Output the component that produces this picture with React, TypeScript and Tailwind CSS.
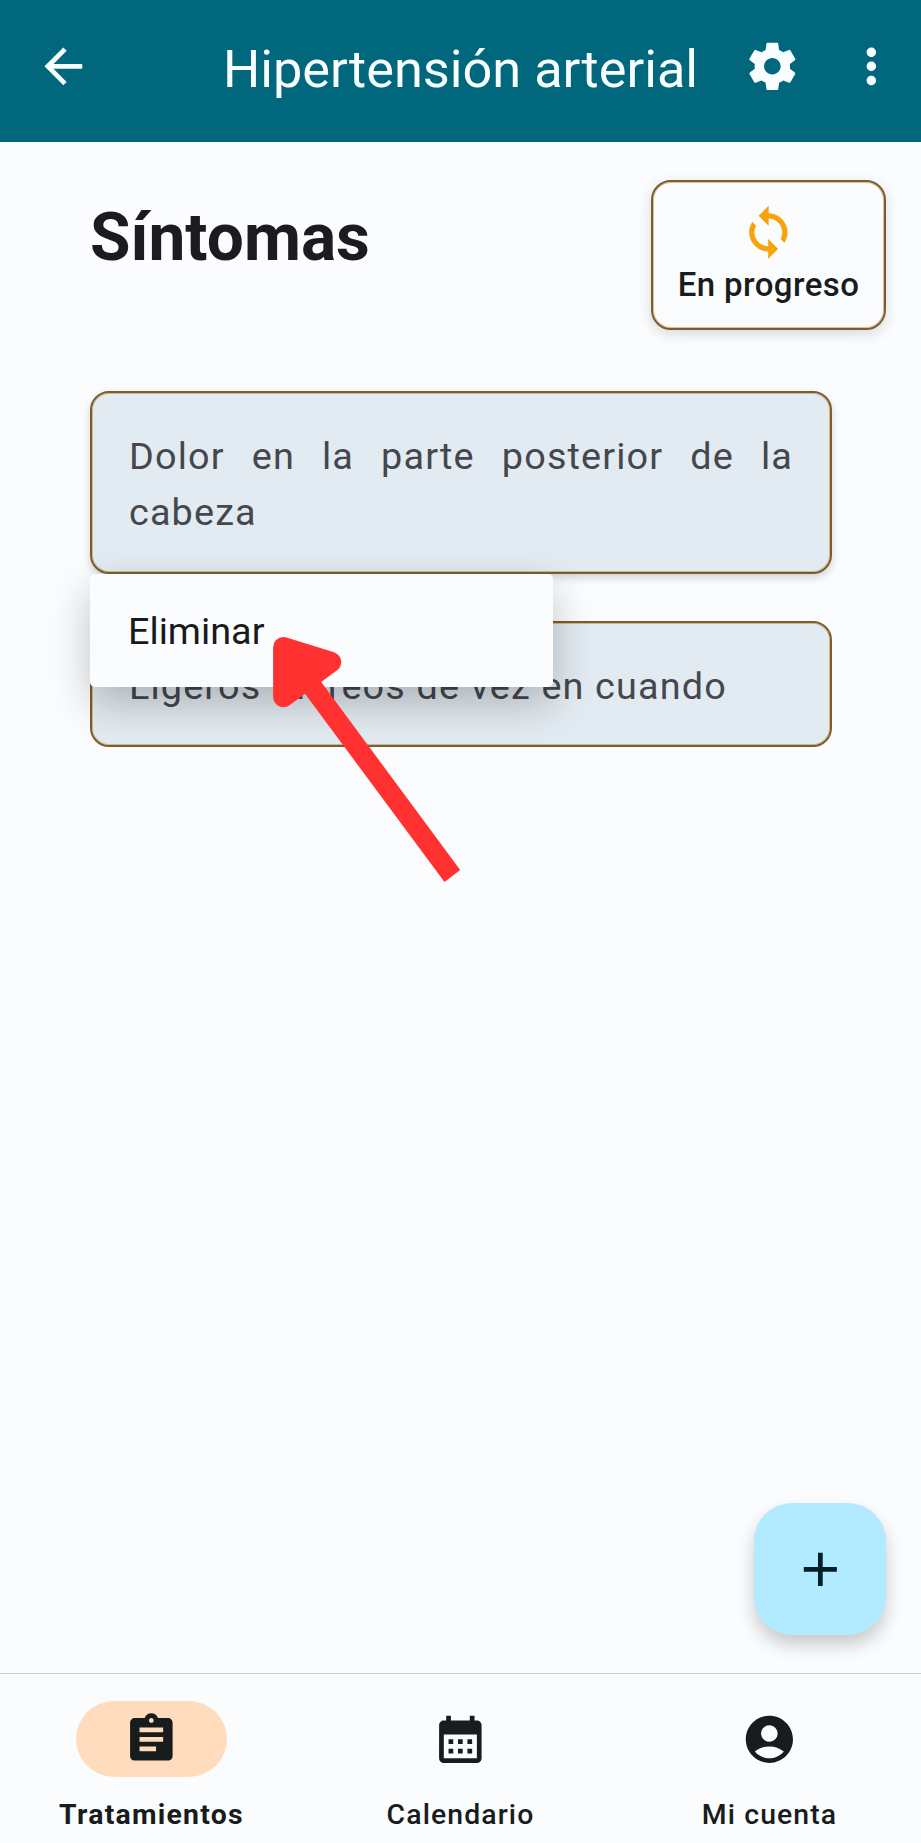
import React from "react";

const paths = {
  back: "M20 11H7.83l5.59-5.59L12 4l-8 8 8 8 1.41-1.41L7.83 13H20v-2z",
  settings:
    "M19.43 12.98c.04-.32.07-.64.07-.98s-.03-.66-.07-.98l2.11-1.65c.19-.15.24-.42.12-.64l-2-3.46c-.12-.22-.39-.3-.61-.22l-2.49 1c-.52-.4-1.08-.73-1.69-.98l-.38-2.65C14.46 2.18 14.25 2 14 2h-4c-.25 0-.46.18-.49.42l-.38 2.65c-.61.25-1.17.59-1.69.98l-2.49-1c-.23-.09-.49 0-.61.22l-2 3.46c-.13.22-.07.49.12.64l2.11 1.65c-.04.32-.07.65-.07.98s.03.66.07.98l-2.11 1.65c-.19.15-.24.42-.12.64l2 3.46c.12.22.39.3.61.22l2.49-1c.52.4 1.08.73 1.69.98l.38 2.65c.03.24.24.42.49.42h4c.25 0 .46-.18.49-.42l.38-2.65c.61-.25 1.17-.59 1.69-.98l2.49 1c.23.09.49 0 .61-.22l2-3.46c.12-.22.07-.49-.12-.64l-2.11-1.65zM12 15.5c-1.93 0-3.5-1.57-3.5-3.5s1.57-3.5 3.5-3.5 3.5 1.57 3.5 3.5-1.57 3.5-3.5 3.5z",
  more: "M12 8c1.1 0 2-.9 2-2s-.9-2-2-2-2 .9-2 2 .9 2 2 2zm0 2c-1.1 0-2 .9-2 2s.9 2 2 2 2-.9 2-2-.9-2-2-2zm0 6c-1.1 0-2 .9-2 2s.9 2 2 2 2-.9 2-2-.9-2-2-2z",
  sync: "M12 4V1L8 5l4 4V6c3.31 0 6 2.69 6 6 0 1.01-.25 1.97-.7 2.8l1.46 1.46C19.54 15.03 20 13.57 20 12c0-4.42-3.58-8-8-8zm0 14c-3.31 0-6-2.69-6-6 0-1.01.25-1.97.7-2.8L5.24 7.74C4.46 8.97 4 10.43 4 12c0 4.42 3.58 8 8 8v3l4-4-4-4v3z",
  add: "M19 13h-6v6h-2v-6H5v-2h6V5h2v6h6v2z",
  assignment:
    "M19 3h-4.18C14.4 1.84 13.3 1 12 1c-1.3 0-2.4.84-2.82 2H5c-1.1 0-2 .9-2 2v14c0 1.1.9 2 2 2h14c1.1 0 2-.9 2-2V5c0-1.1-.9-2-2-2zm-7 0c.55 0 1 .45 1 1s-.45 1-1 1-1-.45-1-1 .45-1 1-1zm2 14H7v-2h7v2zm3-4H7v-2h10v2zm0-4H7V7h10v2z",
  calendar:
    "M19 4h-1V2h-2v2H8V2H6v2H5c-1.11 0-1.99.9-1.99 2L3 20c0 1.1.89 2 2 2h14c1.1 0 2-.9 2-2V6c0-1.1-.9-2-2-2zm0 16H5V10h14v10zM9 14H7v-2h2v2zm4 0h-2v-2h2v2zm4 0h-2v-2h2v2zm-8 4H7v-2h2v2zm4 0h-2v-2h2v2zm4 0h-2v-2h2v2z",
  account:
    "M12 2C6.48 2 2 6.48 2 12s4.48 10 10 10 10-4.48 10-10S17.52 2 12 2zm0 4c1.93 0 3.5 1.57 3.5 3.5S13.93 13 12 13s-3.5-1.57-3.5-3.5S10.07 6 12 6zm0 14c-2.03 0-4.43-.82-6.14-2.88C7.55 15.8 9.68 15 12 15s4.45.8 6.14 2.12C16.43 19.18 14.03 20 12 20z",
};

function Icon({ name, className = "" }: { name: keyof typeof paths; className?: string }) {
  return (
    <svg viewBox="0 0 24 24" fill="currentColor" className={`size-[56.7px] shrink-0 ${className}`} aria-hidden="true">
      <path d={paths[name]} />
    </svg>
  );
}

function SymptomCard({ children, last = false }: { children: React.ReactNode; last?: boolean }) {
  return (
    <div
      className={`rounded-[19px] border-2 border-[#7d5d2c] bg-[#e2ebf1] px-[37px] text-justify text-[37.8px] leading-[56.7px] tracking-[1.14px] text-[#45474d] ${
        last
          ? "pt-[35.5px] pb-[30px] shadow-[inset_0_0_0_1px_rgba(190,150,90,0.6)]"
          : "pt-[34.5px] pb-[31px] shadow-[inset_0_0_0_1px_rgba(190,150,90,0.6),0_4px_8px_rgba(0,0,0,0.16)]"
      }`}
    >
      {children}
    </div>
  );
}

function PointerArrow() {
  return (
    <svg viewBox="270 634 192 250" className="pointer-events-none absolute top-[60px] left-[180px] h-[250px] w-[192px]" aria-hidden="true">
      <path d="M283.4 647.4 331 662 283.4 697z" fill="#ff3131" stroke="#ff3131" strokeWidth="20.6" strokeLinejoin="round" />
      <path d="M460.2 870 444.5 882 300 687 316 675z" fill="#ff3131" />
    </svg>
  );
}

const tabs: { icon: keyof typeof paths; label: string; active?: boolean }[] = [
  { icon: "assignment", label: "Tratamientos", active: true },
  { icon: "calendar", label: "Calendario" },
  { icon: "account", label: "Mi cuenta" },
];

export default function App() {
  return (
    <div className="flex h-[1843px] w-[921px] flex-col overflow-hidden bg-[#fbfcfe] font-['Roboto',sans-serif] text-[#191c1d]">
      <header className="flex h-[142px] shrink-0 items-start bg-[#00677c] pt-[38px] text-[#f8fdff]">
        <div className="flex w-[221px] pl-[35px]">
          <Icon name="back" />
        </div>
        <h1 className="flex-1 pt-px text-center text-[52.3px] leading-[60px] whitespace-nowrap">Hipertensión arterial</h1>
        <div className="flex w-[221px] justify-end gap-[43px] pr-[21px]">
          <Icon name="settings" />
          <Icon name="more" />
        </div>
      </header>

      <main className="flex flex-1 flex-col">
        <div className="flex items-start justify-between pt-[38px] pr-[35px] pl-[90px]">
          <h2 className="pt-[19px] text-[65.8px] leading-[78px] font-bold text-[#1b1b20]">Síntomas</h2>
          <div className="flex h-[150px] w-[235px] flex-col items-center rounded-[20px] border-2 border-[#7d5d2c] pt-[22px] shadow-[inset_0_0_0_1px_rgba(190,150,90,0.6),0_4px_14px_rgba(0,0,0,0.14)]">
            <Icon name="sync" className="stroke-current stroke-[0.25]  text-[#f9a30c]" />
            <span className="pt-px text-[33px] leading-[46px] font-medium tracking-[0.4px] whitespace-nowrap">En progreso</span>
          </div>
        </div>

        <div className="mt-[61px] pr-[89px] pl-[90px]">
          <SymptomCard>Dolor en la parte posterior de la cabeza</SymptomCard>
          <div className="relative h-[47px]">
            <div className="absolute top-0 left-0 z-10 h-[113px] w-[463px] rounded-[5px] bg-[#fbfcfe] shadow-[0_16px_42px_rgba(0,0,0,0.24)]">
              <div className="flex h-full items-center pt-[2px] pl-[38px] text-[37.8px] text-[#191a1c]">Eliminar</div>
              <PointerArrow />
            </div>
          </div>
          <SymptomCard last>Ligeros mareos de vez en cuando</SymptomCard>
        </div>

        <button className="mt-auto mr-[35px] mb-[38px] flex size-[132px] items-center justify-center self-end rounded-[38px] bg-[#b2ebff] text-[#001f27] shadow-[0_10px_18px_rgba(0,0,0,0.2)]">
          <Icon name="add" />
        </button>
      </main>

      <nav className="grid h-[170px] shrink-0 grid-cols-[303px_1fr_303px] border-t border-[#cdcfd2]">
        {tabs.map((tab) => (
          <div key={tab.label} className="flex flex-col items-center pt-[27px]">
            <div className={`flex h-[76px] w-[151px] items-center justify-center rounded-full ${tab.active ? "bg-[#ffdcbe]" : ""}`}>
              <Icon name={tab.icon} />
            </div>
            <span className={`mt-[18px] text-[28.4px] leading-[40px] ${tab.active ? "font-bold tracking-[1.25px]" : "font-medium tracking-[1.1px]"}`}>{tab.label}</span>
          </div>
        ))}
      </nav>
    </div>
  );
}
